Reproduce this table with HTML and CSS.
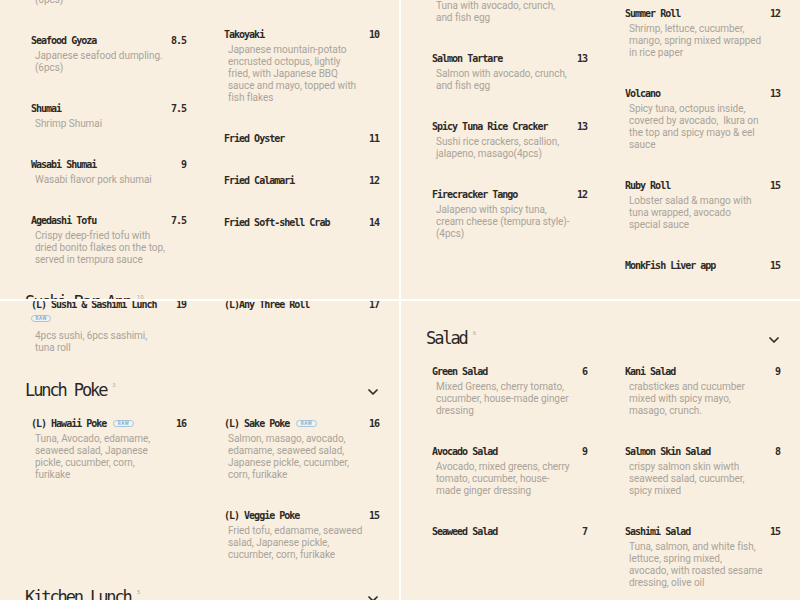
FILE: index.html
```html
<!DOCTYPE html>
<html lang="en">
<head>
<meta charset="utf-8">
<title>Menu</title>
<link rel="stylesheet" href="styles.css">
</head>
<body>
<div class="board">

  <!-- top left -->
  <div class="tile">
    <div class="page page--tl">
      <section class="section">
        <div class="cols">
          <div class="col">
            <div class="item">
              <div class="item-head"><span class="name">Gyoza</span><span class="price">7.5</span></div>
              <p class="desc">Japanese pork dumpling.<br>(6pcs)</p>
            </div>
            <div class="item">
              <div class="item-head"><span class="name">Seafood Gyoza</span><span class="price">8.5</span></div>
              <p class="desc">Japanese seafood dumpling.<br>(6pcs)</p>
            </div>
            <div class="item">
              <div class="item-head"><span class="name">Shumai</span><span class="price">7.5</span></div>
              <p class="desc">Shrimp Shumai</p>
            </div>
            <div class="item">
              <div class="item-head"><span class="name">Wasabi Shumai</span><span class="price">9</span></div>
              <p class="desc">Wasabi flavor pork shumai</p>
            </div>
            <div class="item">
              <div class="item-head"><span class="name">Agedashi Tofu</span><span class="price">7.5</span></div>
              <p class="desc">Crispy deep-fried tofu with<br>dried bonito flakes on the top,<br>served in tempura sauce</p>
            </div>
          </div>
          <div class="col col--tl2">
            <div class="item">
              <div class="item-head"><span class="name">Takoyaki</span><span class="price">10</span></div>
              <p class="desc">Japanese mountain-potato<br>encrusted octopus, lightly<br>fried, with Japanese BBQ<br>sauce and mayo, topped with<br>fish flakes</p>
            </div>
            <div class="item">
              <div class="item-head"><span class="name">Fried Oyster</span><span class="price">11</span></div>
            </div>
            <div class="item">
              <div class="item-head"><span class="name">Fried Calamari</span><span class="price">12</span></div>
            </div>
            <div class="item">
              <div class="item-head"><span class="name">Fried Soft-shell Crab</span><span class="price">14</span></div>
            </div>
          </div>
        </div>
      </section>
      <section class="section">
        <div class="section-head">
          <h2 class="section-title">Sushi Bar App<sup class="count">10</sup></h2>
          <svg class="chevron" viewBox="0 0 10 6"><path d="M1 1L5 5L9 1"/></svg>
        </div>
      </section>
    </div>
  </div>

  <!-- top right -->
  <div class="tile">
    <div class="page page--tr">
      <section class="section">
        <div class="cols">
          <div class="col">
            <div class="item">
              <div class="item-head"><span class="name">Tuna Tartare</span><span class="price">13</span></div>
              <p class="desc">Tuna with avocado, crunch,<br>and fish egg</p>
            </div>
            <div class="item">
              <div class="item-head"><span class="name">Salmon Tartare</span><span class="price">13</span></div>
              <p class="desc">Salmon with avocado, crunch,<br>and fish egg</p>
            </div>
            <div class="item">
              <div class="item-head"><span class="name">Spicy Tuna Rice Cracker</span><span class="price">13</span></div>
              <p class="desc">Sushi rice crackers, scallion,<br>jalapeno, masago(4pcs)</p>
            </div>
            <div class="item">
              <div class="item-head"><span class="name">Firecracker Tango</span><span class="price">12</span></div>
              <p class="desc">Jalapeno with spicy tuna,<br>cream cheese (tempura style)-<br>(4pcs)</p>
            </div>
          </div>
          <div class="col col--tr2">
            <div class="item">
              <div class="item-head"><span class="name">Summer Roll</span><span class="price">12</span></div>
              <p class="desc">Shrimp, lettuce, cucumber,<br>mango, spring mixed wrapped<br>in rice paper</p>
            </div>
            <div class="item">
              <div class="item-head"><span class="name">Volcano</span><span class="price">13</span></div>
              <p class="desc">Spicy tuna, octopus inside,<br>covered by avocado, &nbsp;Ikura on<br>the top and spicy mayo &amp; eel<br>sauce</p>
            </div>
            <div class="item">
              <div class="item-head"><span class="name">Ruby Roll</span><span class="price">15</span></div>
              <p class="desc">Lobster salad &amp; mango with<br>tuna wrapped, avocado<br>special sauce</p>
            </div>
            <div class="item">
              <div class="item-head"><span class="name">MonkFish Liver app</span><span class="price">15</span></div>
            </div>
          </div>
        </div>
      </section>
      <section class="section">
        <div class="section-head">
          <h2 class="section-title">Dessert<sup class="count">4</sup></h2>
          <svg class="chevron" viewBox="0 0 10 6"><path d="M1 1L5 5L9 1"/></svg>
        </div>
      </section>
    </div>
  </div>

  <!-- bottom left -->
  <div class="tile">
    <div class="page page--bl">
      <section class="section">
        <div class="cols">
          <div class="col">
            <div class="item">
              <div class="item-head"><span class="name">(L) Sushi &amp; Sashimi Lunch</span><span class="price">19</span></div>
              <div class="badge-row"><span class="badge">RAW</span></div>
              <p class="desc">4pcs sushi, 6pcs sashimi,<br>tuna roll</p>
            </div>
          </div>
          <div class="col">
            <div class="item">
              <div class="item-head"><span class="name">(L)Any Three Roll</span><span class="price">17</span></div>
            </div>
          </div>
        </div>
      </section>
      <section class="section">
        <div class="section-head">
          <h2 class="section-title">Lunch Poke<sup class="count">3</sup></h2>
          <svg class="chevron" viewBox="0 0 10 6"><path d="M1 1L5 5L9 1"/></svg>
        </div>
        <div class="cols">
          <div class="col">
            <div class="item">
              <div class="item-head"><span class="name">(L) Hawaii Poke<span class="badge">RAW</span></span><span class="price">16</span></div>
              <p class="desc">Tuna, Avocado, edamame,<br>seaweed salad, Japanese<br>pickle, cucumber, corn,<br>furikake</p>
            </div>
          </div>
          <div class="col">
            <div class="item">
              <div class="item-head"><span class="name">(L) Sake Poke<span class="badge">RAW</span></span><span class="price">16</span></div>
              <p class="desc">Salmon, masago, avocado,<br>edamame, seaweed salad,<br>Japanese pickle, cucumber,<br>corn, furikake</p>
            </div>
            <div class="item">
              <div class="item-head"><span class="name">(L) Veggie Poke</span><span class="price">15</span></div>
              <p class="desc">Fried tofu, edamame, seaweed<br>salad, Japanese pickle,<br>cucumber, corn, furikake</p>
            </div>
          </div>
        </div>
      </section>
      <section class="section">
        <div class="section-head">
          <h2 class="section-title">Kitchen Lunch<sup class="count">5</sup></h2>
          <svg class="chevron" viewBox="0 0 10 6"><path d="M1 1L5 5L9 1"/></svg>
        </div>
      </section>
    </div>
  </div>

  <!-- bottom right -->
  <div class="tile">
    <div class="page page--br">
      <section class="section">
        <div class="section-head">
          <h2 class="section-title">Salad<sup class="count">6</sup></h2>
          <svg class="chevron" viewBox="0 0 10 6"><path d="M1 1L5 5L9 1"/></svg>
        </div>
        <div class="cols">
          <div class="col">
            <div class="item">
              <div class="item-head"><span class="name">Green Salad</span><span class="price">6</span></div>
              <p class="desc">Mixed Greens, cherry tomato,<br>cucumber, house-made ginger<br>dressing</p>
            </div>
            <div class="item">
              <div class="item-head"><span class="name">Avocado Salad</span><span class="price">9</span></div>
              <p class="desc">Avocado, mixed greens, cherry<br>tomato, cucumber, house-<br>made ginger dressing</p>
            </div>
            <div class="item">
              <div class="item-head"><span class="name">Seaweed Salad</span><span class="price">7</span></div>
            </div>
          </div>
          <div class="col">
            <div class="item">
              <div class="item-head"><span class="name">Kani Salad</span><span class="price">9</span></div>
              <p class="desc">crabstickes and cucumber<br>mixed with spicy mayo,<br>masago, crunch.</p>
            </div>
            <div class="item">
              <div class="item-head"><span class="name">Salmon Skin Salad</span><span class="price">8</span></div>
              <p class="desc">crispy salmon skin wiwth<br>seaweed salad, cucumber,<br>spicy mixed</p>
            </div>
            <div class="item">
              <div class="item-head"><span class="name">Sashimi Salad</span><span class="price">15</span></div>
              <p class="desc">Tuna, salmon, and white fish,<br>lettuce, spring mixed,<br>avocado, with roasted sesame<br>dressing, olive oil</p>
            </div>
          </div>
        </div>
      </section>
    </div>
  </div>

</div>
</body>
</html>
```

FILE: styles.css
```css
* { box-sizing: border-box; margin: 0; padding: 0; }
html, body { width: 800px; height: 600px; overflow: hidden; }
body { background: #ffffff; font-family: Roboto, "Liberation Sans", sans-serif; }

.board {
  display: grid;
  grid-template-columns: 399px 399px;
  grid-template-rows: 299px 299px;
  gap: 2px;
  width: 800px;
  height: 600px;
  background: #ffffff;
}
.tile { background: #f8efe1; overflow: hidden; }

.page { padding-left: 25px; width: 385px; }
.page--tl { margin-top: -34px; }
.page--tr { margin-top: -16px; }
.page--bl { margin-top: -3px; }
.page--br { padding-top: 25px; }

.section + .section { margin-top: 24px; }

.section-head {
  display: flex;
  justify-content: space-between;
  align-items: center;
  height: 24px;
  margin-bottom: 15px;
}
.section-title {
  font: 400 17px/24px "DejaVu Sans Mono", monospace;
  letter-spacing: -2.1px;
  color: #2a2723;
  white-space: nowrap;
}
.count {
  font: 400 6px/6px Roboto, sans-serif;
  letter-spacing: 0;
  color: #b3ada3;
  vertical-align: 9px;
  margin-left: 6px;
}
.chevron {
  width: 10px;
  height: 6px;
  margin: 3px 7px 0 0;
  fill: none;
  stroke: #2f2c28;
  stroke-width: 1.7;
  stroke-linecap: round;
  stroke-linejoin: round;
}

.cols {
  display: grid;
  grid-template-columns: 167px 167px;
  column-gap: 26px;
  align-items: start;
}
.col { display: flex; flex-direction: column; gap: 28px; }
.col--tl2 { padding-top: 62px; }
.col--tr2 { padding-top: 23px; }

.item { padding: 0 6px; }
.item-head {
  display: flex;
  justify-content: space-between;
  align-items: center;
  height: 14px;
  font: 700 10px/14px "DejaVu Sans Mono", monospace;
  letter-spacing: -1px;
  color: #2d2a26;
}
.name { display: flex; align-items: center; gap: 7px; white-space: nowrap; }
.badge-row { display: flex; height: 16px; padding-top: 3px; }
.badge {
  display: inline-block;
  height: 7px;
  padding: 0 3.5px;
  border: 1px solid #a3c5da;
  border-radius: 4px;
  background: #f3f3ed;
  font: 700 4.6px/5px Roboto, sans-serif;
  letter-spacing: 0.5px;
  color: #86b0cd;
  margin-top: -2px;
}
.badge-row .badge { margin-top: 0; }
.desc {
  margin: 2px 0 0 4px;
  font-size: 10px;
  line-height: 12px;
  letter-spacing: -0.05px;
  color: #a9a399;
}
```
